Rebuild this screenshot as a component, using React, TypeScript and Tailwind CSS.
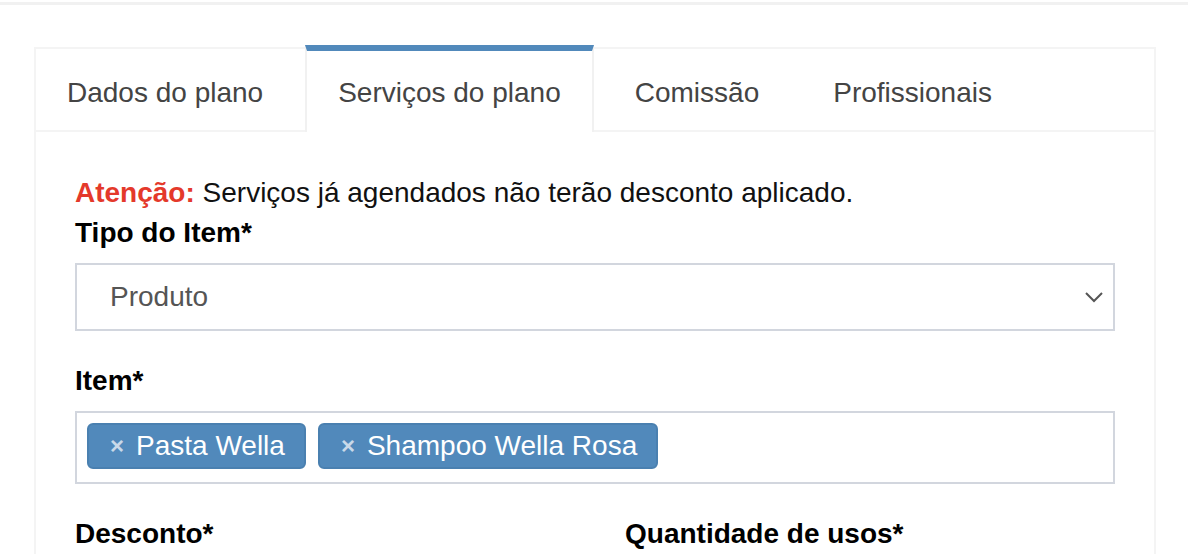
const tabs = ["Dados do plano", "Serviços do plano", "Comissão", "Profissionais"];

function Tag({ label }: { label: string }) {
  return (
    <span className="flex items-center h-[46px] pl-[21px] pr-[19px] rounded-[6px] bg-[#5189bb] border-2 border-[#4a80b0] text-white">
      <span className="text-[#c9d9e9] font-bold text-[24px] mr-[12px] leading-none">×</span>
      {label}
    </span>
  );
}

export default function App() {
  return (
    <div className="w-[1188px] h-[556px] overflow-hidden bg-white font-['Liberation_Sans',Arial,sans-serif] text-[28px] leading-[40px]">
      <div className="mt-[2px] h-[3px] bg-[#f1f1f1]" />

      <div className="ml-[34px] mt-[42px] w-[1122px] border-2 border-b-0 border-[#f4f4f4] bg-white">
        {/* tabs */}
        <ul className="flex border-b-2 border-[#f4f4f4] -mt-[4px]">
          {tabs.map((t, i) =>
            i === 1 ? (
              <li
                key={t}
                className="-mb-[2px] mr-[8px] px-[31px] pt-[22px] pb-[19px] border-t-[6px] border-t-[#5189bb] border-x-2 border-x-[#f1f1f1] bg-white text-[#444]"
              >
                {t}
              </li>
            ) : (
              <li
                key={t}
                className={`${i === 0 ? "-ml-[2px] mr-[9px]" : "mr-[8px]"} px-[31px] pt-[28px] pb-[17px] border-x-2 border-x-transparent text-[#444]`}
              >
                {t}
              </li>
            )
          )}
        </ul>

        {/* content */}
        <div className="px-[39px] pt-[41px]">
          <p className="text-[#111]">
            <span className="font-bold text-[#e4392b]">Atenção:</span> Serviços já agendados não terão desconto aplicado.
          </p>

          <div className="mb-[30px]">
            <label className="block font-bold text-black mb-[10px]">Tipo do Item*</label>
            <div className="h-[68px] border-2 border-[#d2d6de] flex items-center justify-between pl-[33px] pr-[8px] text-[#555]">
              <span>Produto</span>
              <svg width="20" height="12" viewBox="0 0 20 12" className="mr-[1px]">
                <path d="M2 2 L10 10 L18 2" fill="none" stroke="#555" strokeWidth="2" />
              </svg>
            </div>
          </div>

          <div className="mb-[30px]">
            <label className="block font-bold text-black mb-[10px]">Item*</label>
            <div className="h-[73px] border-2 border-[#d2d6de] flex items-start gap-[12px] pt-[10px] px-[10px]">
              <Tag label="Pasta Wella" />
              <Tag label="Shampoo Wella Rosa" />
            </div>
          </div>

          <div className="grid grid-cols-2 gap-[60px]">
            <label className="block font-bold text-black">Desconto*</label>
            <label className="block font-bold text-black">Quantidade de usos*</label>
          </div>
        </div>
      </div>
    </div>
  );
}
